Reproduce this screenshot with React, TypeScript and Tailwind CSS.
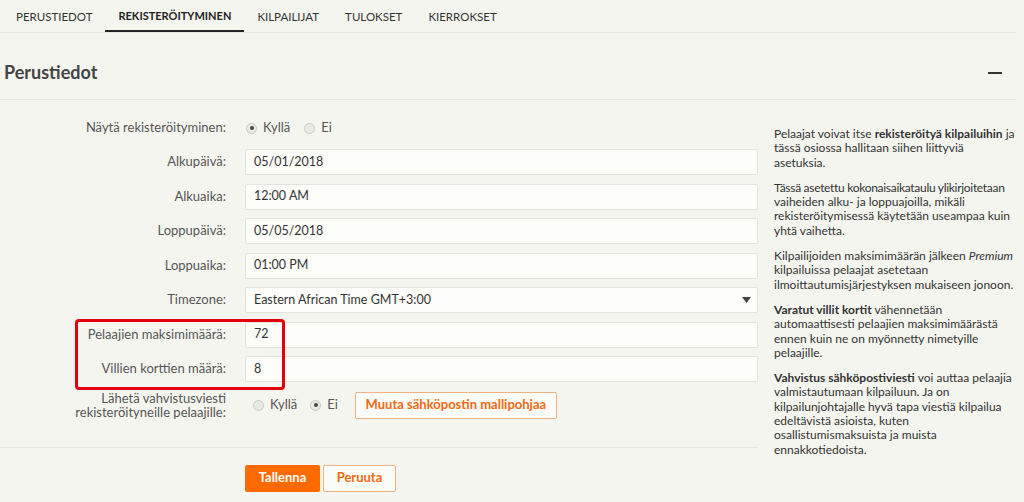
import React from "react";

function Radio({ checked }: { checked?: boolean }) {
  return (
    <span className="inline-flex h-[11px] w-[11px] items-center justify-center rounded-full border border-[#c8c8c4] bg-[#e9e9e6]">
      {checked && <span className="h-[4px] w-[4px] rounded-full bg-[#444]" />}
    </span>
  );
}

function Field({ label, value, select }: { label: string; value: string; select?: boolean }) {
  return (
    <div className="flex h-[26px] items-center">
      <div className="w-[226px] shrink-0 text-right text-[13px] text-[#555]">{label}</div>
      <div className="ml-[19px] flex h-full flex-1 items-center justify-between rounded-[2px] border border-[#e4e4de] bg-[#fdfdfa] pl-[8px] pr-[6px] text-[12.5px] text-[#333]">
        <span>{value}</span>
        {select && (
          <svg width="9" height="6" viewBox="0 0 9 6">
            <path d="M0 0h9L4.5 6z" fill="#444" />
          </svg>
        )}
      </div>
    </div>
  );
}

export default function App() {
  const tabs = ["PERUSTIEDOT", "REKISTERÖITYMINEN", "KILPAILIJAT", "TULOKSET", "KIERROKSET"];
  return (
    <div className="h-[502px] w-[1024px] overflow-hidden bg-[#f5f5f0] font-['Lato',sans-serif] text-[#333]">
      <div className="mr-[8px]">
        <nav className="flex h-[33px] items-stretch border-b border-[#e8e8e3] pl-[3px]">
          {tabs.map((t, i) => (
            <div
              key={t}
              className={
                i === 1
                  ? "flex items-center border-b-2 border-[#222] px-[13px] pt-[2px] text-[11px] font-bold text-[#222]"
                  : "flex items-center px-[13px] pt-[2px] text-[11.5px] text-[#333]"
              }
            >
              {t}
            </div>
          ))}
        </nav>

        <div className="flex h-[67px] items-center justify-between border-b border-[#e6e6e1] pl-[4px] pr-[14px] pt-[13px]">
          <h2 className="text-[18px] font-bold text-[#444]">Perustiedot</h2>
          <span className="block h-[2px] w-[14px] bg-[#333]" />
        </div>

        <div className="flex">
          <div className="w-[758px] shrink-0">
            <div className="flex flex-col gap-y-[8.5px] border-b border-[#e6e6e1] pb-[27px] pt-[16px]">
              <div className="mb-[0.5px] flex h-[24px] items-center">
                <div className="w-[226px] shrink-0 text-right text-[13px] text-[#555]">Näytä rekisteröityminen:</div>
                <div className="ml-[20px] flex items-center gap-[6px] text-[13px] text-[#555]">
                  <Radio checked />
                  <span>Kyllä</span>
                  <span className="ml-[2px]" />
                  <Radio />
                  <span>Ei</span>
                </div>
              </div>
              <Field label="Alkupäivä:" value="05/01/2018" />
              <Field label="Alkuaika:" value="12:00 AM" />
              <Field label="Loppupäivä:" value="05/05/2018" />
              <Field label="Loppuaika:" value="01:00 PM" />
              <Field label="Timezone:" value="Eastern African Time GMT+3:00" select />
              <div className="relative flex flex-col gap-y-[8.5px]">
                <div className="pointer-events-none absolute left-[75px] top-[-3px] h-[71px] w-[210px] rounded-[4px] border-[3px] border-[#e3000b]" />
                <Field label="Pelaajien maksimimäärä:" value="72" />
                <Field label="Villien korttien määrä:" value="8" />
              </div>
              <div className="flex items-center">
                <div className="w-[226px] shrink-0 text-right text-[13px] leading-[14.5px] text-[#555]">
                  Lähetä vahvistusviesti
                  <br />
                  rekisteröityneille pelaajille:
                </div>
                <div className="ml-[27px] flex items-center gap-[6px] text-[13px] text-[#555]">
                  <Radio />
                  <span>Kyllä</span>
                  <span className="ml-[1px]" />
                  <Radio checked />
                  <span>Ei</span>
                </div>
                <button className="ml-[17px] h-[27px] w-[202px] rounded-[2px] border border-[#f0b080] bg-[#fbfbf8] text-[13px] font-bold text-[#f26a10]">
                  Muuta sähköpostin mallipohjaa
                </button>
              </div>
            </div>

            <div className="flex gap-[3px] pl-[245px] pt-[17px]">
              <button className="h-[27px] w-[75px] rounded-[2px] bg-[#ff6a00] text-[13px] font-bold text-white">Tallenna</button>
              <button className="h-[27px] w-[73px] rounded-[2px] border border-[#f0b080] bg-[#fbfbf8] text-[13px] font-bold text-[#f26a10]">
                Peruuta
              </button>
            </div>
          </div>

          <div className="ml-[16px] flex-1 space-y-[11px] whitespace-nowrap pt-[27px] text-[12px] leading-[14.3px] text-[#333]">
            <p>
              Pelaajat voivat itse <b>rekisteröityä kilpailuihin</b> ja
              <br />
              tässä osiossa hallitaan siihen liittyviä
              <br />
              asetuksia.
            </p>
            <p>
              <span className="tracking-[-0.3px]">Tässä asetettu kokonaisaikataulu ylikirjoitetaan</span>
              <br />
              vaiheiden alku- ja loppuajoilla, mikäli
              <br />
              rekisteröitymisessä käytetään useampaa kuin
              <br />
              yhtä vaihetta.
            </p>
            <p>
              Kilpailijoiden maksimimäärän jälkeen <i>Premium</i>
              <br />
              kilpailuissa pelaajat asetetaan
              <br />
              ilmoittautumisjärjestyksen mukaiseen jonoon.
            </p>
            <p>
              <b>Varatut villit kortit</b> vähennetään
              <br />
              automaattisesti pelaajien maksimimäärästä
              <br />
              ennen kuin ne on myönnetty nimetyille
              <br />
              pelaajille.
            </p>
            <p>
              <b>Vahvistus sähköpostiviesti</b> voi auttaa pelaajia
              <br />
              valmistautumaan kilpailuun. Ja on
              <br />
              kilpailunjohtajalle hyvä tapa viestiä kilpailua
              <br />
              edeltävistä asioista, kuten
              <br />
              osallistumismaksuista ja muista
              <br />
              ennakkotiedoista.
            </p>
          </div>
        </div>
      </div>
    </div>
  );
}
